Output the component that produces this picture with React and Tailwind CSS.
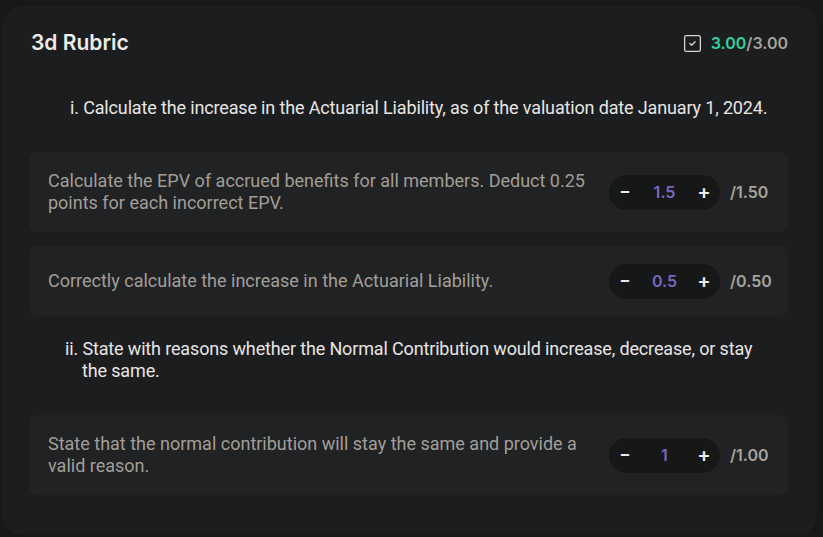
import React from 'react';
import { SquareCheck } from 'lucide-react';

const SECTIONS = [
  {
    label: 'i.',
    text: 'Calculate the increase in the Actuarial Liability, as of the valuation date January 1, 2024.',
    pad: 'pl-[41px] -mr-[10px]',
    items: [
      { text: 'Calculate the EPV of accrued benefits for all members. Deduct 0.25 points for each incorrect EPV.', value: '1.5', max: '1.50' },
      { text: 'Correctly calculate the increase in the Actuarial Liability.', value: '0.5', max: '0.50' },
    ],
  },
  {
    label: 'ii.',
    text: 'State with reasons whether the Normal Contribution would increase, decrease, or stay the same.',
    pad: 'pl-[53px] pr-[13px] -indent-[17px]',
    items: [
      { text: 'State that the normal contribution will stay the same and provide a valid reason.', value: '1', max: '1.00' },
    ],
  },
];

const Stepper = ({ value, max }) => (
  <div className="flex items-center shrink-0">
    <div className="flex items-center h-[35px] w-[111px] rounded-full bg-[#161717] font-['Inter',sans-serif] font-semibold text-[16px]">
      <button className="w-[32px] text-center text-[#ececec] text-[17px]">−</button>
      <span className="w-[47px] text-center text-[#7b66c2]">{value}</span>
      <button className="w-[32px] text-center text-[#ececec] text-[20px] leading-none">+</button>
    </div>
    <span className="ml-[10px] w-[41px] font-['Inter',sans-serif] font-semibold text-[16px] text-[#a8a39c]">/{max}</span>
  </div>
);

export default function App() {
  return (
    <div className="min-h-[537px] w-[823px] bg-[#171918] pt-[6px] pl-[2px] font-['Roboto',sans-serif]">
      <div className="w-[815px] min-h-[529px] rounded-[20px] bg-[#1c1d1f] pl-[27px] pr-[29px] pt-[21px] pb-[40px]">
        {/* Header */}
        <div className="flex items-center justify-between h-[32px] pl-[2px] pr-[-1px]">
          <h2 className="font-['Inter',sans-serif] font-semibold text-[21px] text-[#ececec]">3d Rubric</h2>
          <div className="flex items-center gap-[8px] font-['Inter',sans-serif] font-semibold text-[16px]">
            <SquareCheck size={21} strokeWidth={1.5} className="text-[#d6d3d1]" />
            <span>
              <span className="text-[#2fd39e]">3.00</span>
              <span className="text-[#a8a39c]">/3.00</span>
            </span>
          </div>
        </div>

        {SECTIONS.map((section, si) => (
          <div key={si}>
            <p
              className={`${section.pad} text-[18px] leading-[22px] tracking-[-0.15px] text-[#e7e5e4] ${si === 0 ? 'mt-[38px]' : 'mt-[22px]'} mb-[33px]`}
            >
              {section.label} {section.text}
            </p>
            <div className="flex flex-col gap-[14px]">
              {section.items.map((item, ii) => (
                <div
                  key={ii}
                  className={`flex items-center gap-6 rounded-[8px] bg-[#212224] pl-[19px] pr-[17px] ${item.text.length > 70 ? 'h-[80px]' : 'h-[70px]'}`}
                >
                  <p className="flex-1 text-[18px] leading-[22px] text-[#a29e98]">{item.text}</p>
                  <Stepper value={item.value} max={item.max} />
                </div>
              ))}
            </div>
          </div>
        ))}
      </div>
    </div>
  );
}
